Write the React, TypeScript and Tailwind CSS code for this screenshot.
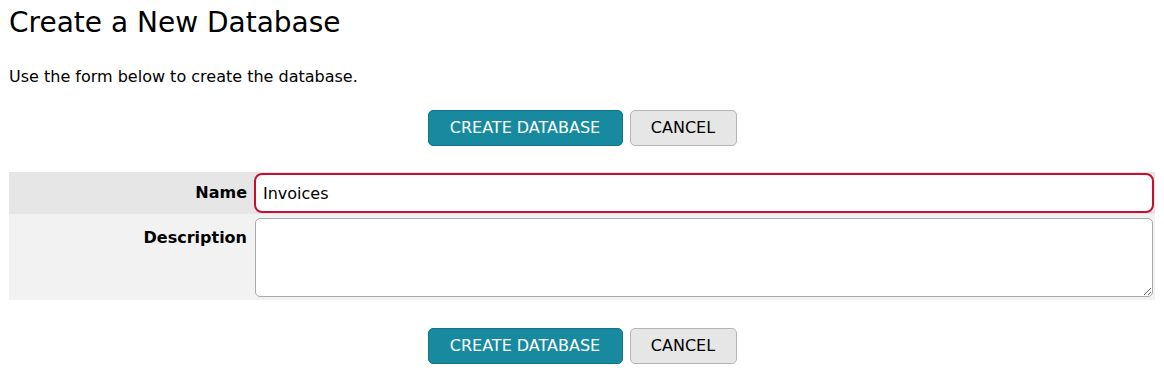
import React from 'react';

const ButtonRow = () => (
  <div className="flex justify-center gap-[7px]">
    <button className="h-9 w-[195px] rounded-[5px] border border-[#127488] bg-[#178aa0] text-[16px] text-white">
      CREATE DATABASE
    </button>
    <button className="h-9 w-[107px] rounded-[5px] border border-[#b5b5b5] bg-[#e6e6e6] text-[16px] text-black">
      CANCEL
    </button>
  </div>
);

export default function App() {
  return (
    <div className="min-h-[375px] bg-white px-[9px] text-black" style={{ fontFamily: '"DejaVu Sans", Verdana, sans-serif' }}>
      <h1 className="pt-[4px] text-[28px] leading-[38px]">Create a New Database</h1>
      <p className="mt-[25px] text-[16px] leading-[20px]">Use the form below to create the database.</p>

      <div className="mt-[23px]">
        <ButtonRow />
      </div>

      <div className="mt-[26px] w-[1146px]">
        <div className="flex h-[42px] items-center bg-[#e6e6e6]">
          <div className="w-[244px] pr-[6px] text-right text-[16px] font-bold">Name</div>
          <div className="flex-1 pl-[1px] pr-[1px]">
            <input
              className="h-[40px] w-full rounded-[8px] border-2 border-[#c8102e] bg-white px-[7px] text-[16px] outline-none"
              defaultValue="Invoices"
            />
          </div>
        </div>
        <div className="flex h-[86px] bg-[#f2f2f2]">
          <div className="w-[244px] pr-[6px] pt-[12px] text-right text-[16px] font-bold">Description</div>
          <div className="flex-1 pl-[2px] pr-[2px] pt-[4px]">
            <textarea className="block h-[79px] w-full resize-y rounded-[5px] border border-[#a9a9a9] bg-white px-[7px] text-[16px] outline-none" />
          </div>
        </div>
      </div>

      <div className="mt-[28px]">
        <ButtonRow />
      </div>
    </div>
  );
}
